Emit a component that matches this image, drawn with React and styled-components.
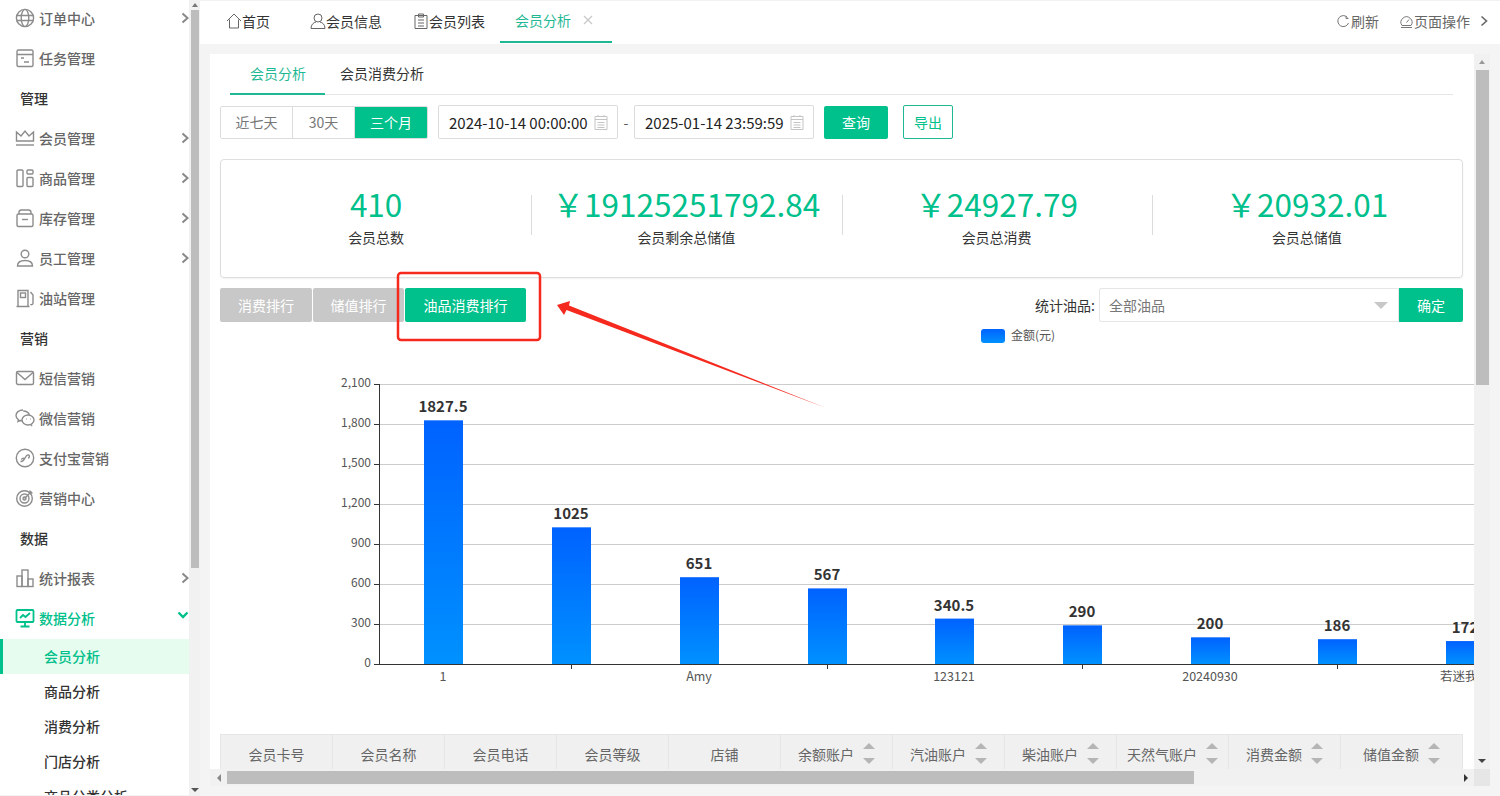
import React from "react";
import styled, { createGlobalStyle } from "styled-components";

const GREEN = "#00c08b";
const FONT = '"Noto Sans CJK SC", "Noto Sans", sans-serif';

const Global = createGlobalStyle`
  html, body { margin: 0; padding: 0; background: #f4f4f4; }
  body { font-family: ${FONT}; font-size: 14px; overflow: hidden; }
  * { box-sizing: border-box; }
`;

/* sidebar icons, 20x20 */
const icons = {
  globe: <><circle cx="10" cy="10" r="8.6" /><ellipse cx="10" cy="10" rx="3.8" ry="8.6" /><path d="M1.5 7.5h17M1.5 12.5h17" /></>,
  task: <><rect x="2" y="2" width="16" height="16.5" rx="1.5" /><path d="M2 6.5h16M6 10h3M9 14h5" /></>,
  crown: <><path d="M1.5 13V4l4.5 4L10 3l4 5 4.5-4v9z" /><path d="M1 17h18" /></>,
  goods: <><rect x="2" y="2" width="6" height="16.5" rx="1" /><rect x="12" y="2" width="6" height="4" rx="1" /><rect x="12" y="9.5" width="6" height="9" rx="1" /></>,
  box: <><path d="M4 6V4.5C4 3 5 2 6.5 2h7C15 2 16 3 16 4.5V6" /><rect x="2" y="6" width="16" height="12.5" rx="1.5" /><path d="M7 11.5h6" /></>,
  user: <><circle cx="10" cy="6" r="3.8" /><path d="M2.5 18c0-3.5 3-5.5 7.500-5.500s7.500 2 7.500 5.500z" /></>,
  fuel: <><path d="M3 18V2.500h10V18M1.500 18.500h13" /><rect x="5.500" y="5" width="5" height="4.500" /><path d="M15.500 4l2.500 3v8c0 2-2 2-2.500 1" /></>,
  mail: <><rect x="1.500" y="3.500" width="17" height="13" rx="1.500" /><path d="M2 4.500l8 7 8-7" /></>,
  wechat: <><path d="M8 2C4 2 1 4.500 1 7.500c0 1.800 1 3.200 2.500 4.300L3 13.500l2-1c.8.300 1.600.4 2.500.4" /><path d="M8.200 3c3 .1 5.500 1.800 6.300 4" /><ellipse cx="13" cy="12" rx="6" ry="5" /><path d="M16 16.500l1 1.500" /><path d="M11 11h.5M15 11h.5" /></>,
  alipay: <><circle cx="10" cy="10" r="8.700" /><path d="M5.500 13.500c2.500.5 3.500-1.500 4.500-3.500s2-3.500 3.500-3 1 3-.5 3M9.500 11c-1-1.200-3-.8-3 .7" /></>,
  target: <><circle cx="9.500" cy="10.500" r="7.800" /><circle cx="9.500" cy="10.500" r="4.500" /><circle cx="9.500" cy="10.500" r="1.500" /><path d="M9.500 10.500l7-7M15 2.500v2.500h2.500" /></>,
  bars: <><rect x="2" y="8" width="5" height="10.500" /><rect x="7" y="2" width="6" height="16.500" /><rect x="13" y="11" width="5" height="7.500" /></>,
  monitor: <><rect x="1.500" y="2" width="17" height="12" rx="1" /><path d="M5 10l3-3 2.500 2L15 5M10 14v4M5.500 18.500h9" /></>,
};

const menu = [
  { t: "item", label: "订单中心", icon: "globe", more: true },
  { t: "item", label: "任务管理", icon: "task" },
  { t: "group", label: "管理" },
  { t: "item", label: "会员管理", icon: "crown", more: true },
  { t: "item", label: "商品管理", icon: "goods", more: true },
  { t: "item", label: "库存管理", icon: "box", more: true },
  { t: "item", label: "员工管理", icon: "user", more: true },
  { t: "item", label: "油站管理", icon: "fuel" },
  { t: "group", label: "营销" },
  { t: "item", label: "短信营销", icon: "mail" },
  { t: "item", label: "微信营销", icon: "wechat" },
  { t: "item", label: "支付宝营销", icon: "alipay" },
  { t: "item", label: "营销中心", icon: "target" },
  { t: "group", label: "数据" },
  { t: "item", label: "统计报表", icon: "bars", more: true },
  { t: "item", label: "数据分析", icon: "monitor", open: true },
  { t: "sub", label: "会员分析", active: true },
  { t: "sub", label: "商品分析" },
  { t: "sub", label: "消费分析" },
  { t: "sub", label: "门店分析" },
  { t: "sub", label: "商品分类分析" },
];

const bars = [
  { x: 443, v: 1827.5, name: "1" },
  { x: 571, v: 1025 },
  { x: 699, v: 651, name: "Amy" },
  { x: 827, v: 567 },
  { x: 954, v: 340.5, name: "123121" },
  { x: 1082, v: 290 },
  { x: 1210, v: 200, name: "20240930" },
  { x: 1337, v: 186 },
  { x: 1465, v: 172, name: "若迷我的" },
];

const ticks = [
  { y: 384, l: "2,100" },
  { y: 424, l: "1,800" },
  { y: 464, l: "1,500" },
  { y: 504, l: "1,200" },
  { y: 544, l: "900" },
  { y: 584, l: "600" },
  { y: 624, l: "300" },
  { y: 664, l: "0" },
];

const columns = [
  { l: "会员卡号" },
  { l: "会员名称" },
  { l: "会员电话" },
  { l: "会员等级" },
  { l: "店铺" },
  { l: "余额账户", sort: true },
  { l: "汽油账户", sort: true },
  { l: "柴油账户", sort: true },
  { l: "天然气账户", sort: true },
  { l: "消费金额", sort: true },
  { l: "储值金额", sort: true },
];

const stats = [
  { v: "410", l: "会员总数" },
  { v: "￥19125251792.84", l: "会员剩余总储值" },
  { v: "￥24927.79", l: "会员总消费" },
  { v: "￥20932.01", l: "会员总储值" },
];

const Calendar = () => (
  <CalSvg viewBox="0 0 14 16">
    <path d="M1 2.500h12v13H1zM1 5.500h12M4 1v2M10 1v2M3.500 8.500h7M3.500 11h7M3.500 13.500h7" />
  </CalSvg>
);

const App = () => (
  <Shell>
    <Global />
    <Sidebar>
      <SideNav>
        {menu.map((m) => {
          if (m.t === "group") return <GroupLabel key={m.label}>{m.label}</GroupLabel>;
          if (m.t === "sub") return <SubItem key={m.label} $active={m.active}>{m.label}</SubItem>;
          return (
            <MenuItem key={m.label} $open={m.open}>
              <MenuIcon viewBox="0 0 20 20" $open={m.open}>{icons[m.icon]}</MenuIcon>
              {m.label}
              {m.more && (
                <Chevron viewBox="0 0 8 12"><path d="M1.500 1.500L6.500 6l-5 4.500" /></Chevron>
              )}
              {m.open && (
                <OpenChevron viewBox="0 0 12 8"><path d="M1.500 1.500L6 6l4.500-4.500" /></OpenChevron>
              )}
            </MenuItem>
          );
        })}
      </SideNav>
      <VBar>
        <ArrowBox $h={10}><TriUp $c="#777" /></ArrowBox>
        <VThumb $h={558} $w={8} />
        <VRest />
        <ArrowBox $h={13}><TriDown $c="#555" /></ArrowBox>
      </VBar>
    </Sidebar>

    <Main>
      <TopBar>
        <Tab $w={84}>
          <TabIcon viewBox="0 0 16 16"><path d="M1 8l7-7 7 7M3.500 6.500V15h9V6.500" /></TabIcon>首页
        </Tab>
        <Tab $w={103}>
          <TabIcon viewBox="0 0 16 16"><circle cx="8" cy="5" r="4" /><path d="M1 15.500c0-4 2.500-6 5-6.500M15 15.500c0-4-2.500-6-5-6.500M1 15.500h14" /></TabIcon>会员信息
        </Tab>
        <Tab $w={87}>
          <TabIcon viewBox="0 0 16 16"><path d="M2 2.500h12v13H2zM5.500 1h5v3h-5zM5 7h6M5 10h6M5 13h6" /></TabIcon>会员列表
        </Tab>
        <ActiveTab>
          会员分析
          <CloseMark viewBox="0 0 10 10"><path d="M1 1l8 8M9 1l-8 8" /></CloseMark>
        </ActiveTab>
        <TopActions>
          <TopAction>
            <ActionIcon viewBox="0 0 13 13"><path d="M10.500 2.500a5.500 5.500 0 1 0 1 5.500M9 1v2.500h2.500" /></ActionIcon>刷新
          </TopAction>
          <TopAction>
            <ActionIcon viewBox="0 0 13 13"><path d="M2 10.500a5.500 5.500 0 1 1 9 0zM6.500 7.500L9 4.500M1 12.500h11" /></ActionIcon>页面操作
          </TopAction>
          <TopChevron viewBox="0 0 8 12"><path d="M1.500 1.500L6.500 6l-5 4.500" /></TopChevron>
        </TopActions>
      </TopBar>

      <Body>
        <Card>
          <SubTabs>
            <SubTab $active>会员分析</SubTab>
            <SubTab>会员消费分析</SubTab>
          </SubTabs>

          <Filters>
            <Segment>
              <SegBtn $w={72}>近七天</SegBtn>
              <SegBtn $w={62}>30天</SegBtn>
              <SegBtn $w={72} $active>三个月</SegBtn>
            </Segment>
            <DateBox>2024-10-14 00:00:00<Calendar /></DateBox>
            <Dash>-</Dash>
            <DateBox>2025-01-14 23:59:59<Calendar /></DateBox>
            <PrimaryBtn $w={64}>查询</PrimaryBtn>
            <OutlineBtn>导出</OutlineBtn>
          </Filters>

          <StatsCard>
            {stats.map((s) => (
              <Stat key={s.l}>
                <StatValue>{s.v}</StatValue>
                <StatLabel>{s.l}</StatLabel>
              </Stat>
            ))}
          </StatsCard>

          <RankRow>
            <RankGroup>
              <RankBtn $w={92}>消费排行</RankBtn>
              <RankBtn $w={91}>储值排行</RankBtn>
              <RankBtn $w={121} $active>油品消费排行</RankBtn>
            </RankGroup>
            <OilFilter>
              <OilLabel>统计油品:</OilLabel>
              <OilSelect>全部油品<Caret /></OilSelect>
              <ConfirmBtn>确定</ConfirmBtn>
            </OilFilter>
          </RankRow>

          <Legend>
            <LegendSwatch />
            <LegendText>金额(元)</LegendText>
          </Legend>

          <ChartSvg viewBox="220 344 1254 390" width="1254" height="390">
            <defs>
              <linearGradient id="barFill" x1="0" y1="0" x2="0" y2="1">
                <stop offset="0" stopColor="#0062ff" />
                <stop offset="1" stopColor="#0091ff" />
              </linearGradient>
            </defs>
            {ticks.map((t) => (
              <g key={t.l}>
                {t.y !== 664 && <GridLine x1="379" x2="1474" y1={t.y + 0.5} y2={t.y + 0.5} />}
                <AxisLine x1="374" x2="379" y1={t.y + 0.5} y2={t.y + 0.5} />
                <AxisText x="371" y={t.y + 3} textAnchor="end">{t.l}</AxisText>
              </g>
            ))}
            {bars.map((b) => {
              const top = 664 - (b.v * 280) / 2100;
              return (
                <g key={b.x}>
                  <rect x={b.x - 19} y={top} width="39" height={664 - top} fill="url(#barFill)" />
                  <ValueText x={b.x} y={top - 8} textAnchor="middle">{b.v}</ValueText>
                  {b.name ? (
                    <CategoryText x={b.x} y="681" textAnchor="middle">{b.name}</CategoryText>
                  ) : (
                    <AxisLine x1={b.x + 0.5} x2={b.x + 0.5} y1="664" y2="669" />
                  )}
                </g>
              );
            })}
            <AxisLine x1="379.500" x2="379.500" y1="384" y2="664" />
            <AxisLine x1="374" x2="1474" y1="664.500" y2="664.500" />
          </ChartSvg>

          <TableHead>
            {columns.map((c) => (
              <HeadCell key={c.l}>
                {c.l}
                {c.sort && (
                  <SortBox>
                    <SortUp />
                    <SortDown />
                  </SortBox>
                )}
              </HeadCell>
            ))}
          </TableHead>
        </Card>

        <VBar>
          <ArrowBox $h={16}><TriUp $c="#999" /></ArrowBox>
          <VThumb $h={315} $w={13} />
          <VRest />
          <ArrowBox $h={16}><TriDown $c="#444" /></ArrowBox>
        </VBar>

        <HBar>
          <HArrow><TriLeft /></HArrow>
          <HThumb />
          <HRest />
          <HArrow><TriRight /></HArrow>
        </HBar>
        <Corner />
      </Body>
    </Main>

    <Annotation viewBox="0 0 1500 796" width="1500" height="796">
      <rect x="398" y="273" width="142" height="67" rx="3" fill="none" stroke="#f5291e" strokeWidth="2.500" />
      <polygon points="557,305 570,301 569,305.500 826,408 566.500,310 564,315" fill="#f5291e" />
    </Annotation>
  </Shell>
);

export default App;

const Shell = styled.div`
  position: relative;
  display: flex;
  width: 1500px;
  height: 796px;
  overflow: hidden;
  background: #f4f4f4;
`;

const Sidebar = styled.aside`
  display: flex;
  flex: 0 0 200px;
  height: 796px;
`;

const SideNav = styled.nav`
  flex: 0 0 189px;
  height: 796px;
  margin-top: -1px;
  overflow: hidden;
  background: #fff;
`;

const MenuItem = styled.div`
  position: relative;
  display: flex;
  align-items: center;
  gap: 4px;
  height: 40px;
  padding: 0 0 2px 15px;
  font-weight: 500;
  line-height: 20px;
  color: ${(p) => (p.$open ? GREEN : "#666")};
`;

const MenuIcon = styled.svg`
  flex: 0 0 20px;
  width: 20px;
  height: 20px;
  fill: none;
  stroke: currentColor;
  stroke-width: ${(p) => (p.$open ? 1.8 : 1.4)};
  opacity: ${(p) => (p.$open ? 1 : 0.75)};
`;

const Chevron = styled.svg`
  flex: 0 0 8px;
  width: 8px;
  height: 12px;
  margin-left: auto;
  fill: none;
  stroke: #888;
  stroke-width: 2;
`;

const OpenChevron = styled.svg`
  position: absolute;
  right: 0;
  top: 12px;
  width: 12px;
  height: 8px;
  fill: none;
  stroke: ${GREEN};
  stroke-width: 2.400;
`;

const GroupLabel = styled.div`
  height: 40px;
  padding-left: 20px;
  font-weight: 500;
  line-height: 38px;
  color: #333;
`;

const SubItem = styled.div`
  height: 35px;
  padding-left: 44px;
  font-weight: 500;
  line-height: 35px;
  color: ${(p) => (p.$active ? GREEN : "#333")};
  background: ${(p) => (p.$active ? "#e6fcee" : "#fff")};
  box-shadow: ${(p) => (p.$active ? `inset 3px 0 0 ${GREEN}` : "none")};
`;

const VBar = styled.div`
  display: flex;
  flex-direction: column;
  align-items: center;
  flex: 1;
  background: #f1f1f1;
`;

const ArrowBox = styled.div`
  display: flex;
  align-items: center;
  justify-content: center;
  flex: 0 0 ${(p) => p.$h}px;
  width: 100%;
`;

const VThumb = styled.div`
  flex: 0 0 ${(p) => p.$h}px;
  width: ${(p) => p.$w}px;
  background: #bdbdbd;
`;

const VRest = styled.div`
  flex: 1;
`;

const TriUp = styled.i`
  display: block;
  width: 0;
  height: 0;
  border-left: 3px solid transparent;
  border-right: 3px solid transparent;
  border-bottom: 4px solid ${(p) => p.$c};
`;

const TriDown = styled.i`
  display: block;
  width: 0;
  height: 0;
  border-left: 4px solid transparent;
  border-right: 4px solid transparent;
  border-top: 4px solid ${(p) => p.$c};
`;

const TriLeft = styled.i`
  display: block;
  width: 0;
  height: 0;
  border-top: 4px solid transparent;
  border-bottom: 4px solid transparent;
  border-right: 4px solid #888;
`;

const TriRight = styled.i`
  display: block;
  width: 0;
  height: 0;
  border-top: 4px solid transparent;
  border-bottom: 4px solid transparent;
  border-left: 4px solid #333;
`;

const Main = styled.main`
  display: flex;
  flex-direction: column;
  flex: 1;
  min-width: 0;
`;

const TopBar = styled.header`
  display: flex;
  align-items: stretch;
  flex: 0 0 44px;
  padding-left: 26px;
  border-top: 1px solid #f2f2f2;
  background: #fff;
`;

const Tab = styled.div`
  display: flex;
  align-items: center;
  width: ${(p) => p.$w}px;
  padding-bottom: 3px;
  font-size: 14px;
  color: #333;
`;

const TabIcon = styled.svg`
  width: 16px;
  height: 16px;
  fill: none;
  stroke: #666;
  stroke-width: 1;
`;

const ActiveTab = styled.div`
  display: flex;
  align-items: center;
  width: 112px;
  height: 42px;
  padding: 0 0 3px 15px;
  color: #1fb894;
  border-bottom: 2px solid #1fb894;
`;

const CloseMark = styled.svg`
  width: 10px;
  height: 10px;
  margin-left: 12px;
  fill: none;
  stroke: #c8c8c8;
  stroke-width: 1.200;
`;

const TopActions = styled.div`
  display: flex;
  align-items: center;
  gap: 21px;
  margin-left: auto;
  padding: 0 12px 3px 0;
  font-size: 14px;
  white-space: nowrap;
  color: #666;
`;

const TopChevron = styled.svg`
  flex: 0 0 8px;
  width: 8px;
  height: 12px;
  margin-left: -11px;
  fill: none;
  stroke: #666;
  stroke-width: 1.600;
`;

const TopAction = styled.div`
  display: flex;
  align-items: center;
  gap: 1px;
`;

const ActionIcon = styled.svg`
  flex: 0 0 13px;
  width: 13px;
  height: 13px;
  fill: none;
  stroke: #777;
  stroke-width: 1;
`;

const Body = styled.div`
  display: grid;
  grid-template-columns: 1264px 16px;
  grid-template-rows: 715px 17px;
  padding: 10px 0 0 10px;
`;

const Card = styled.section`
  padding-left: 10px;
  overflow: hidden;
  background: #fff;
`;

const SubTabs = styled.div`
  display: flex;
  width: 1223px;
  height: 41px;
  margin-left: 10px;
  border-bottom: 1px solid #e6e6e6;
`;

const SubTab = styled.div`
  height: 41px;
  padding: 0 ${(p) => (p.$active ? "19px 0 20px" : "15px")};
  width: ${(p) => (p.$active ? "95px" : "auto")};
  line-height: 39px;
  color: ${(p) => (p.$active ? "#1fb894" : "#333")};
  border-bottom: ${(p) => (p.$active ? "2px solid #1fb894" : "none")};
`;

const Filters = styled.div`
  display: flex;
  align-items: center;
  height: 34px;
  margin-top: 10px;
`;

const Segment = styled.div`
  display: flex;
  height: 33px;
  margin-right: 10px;
  overflow: hidden;
  border: 1px solid #dcdcdc;
  border-radius: 2px;
`;

const SegBtn = styled.div`
  width: ${(p) => p.$w}px;
  line-height: 31px;
  text-align: center;
  color: ${(p) => (p.$active ? "#fff" : "#777")};
  background: ${(p) => (p.$active ? GREEN : "#fff")};
  border-right: 1px solid #dcdcdc;
  &:last-child { border-right: none; }
`;

const DateBox = styled.div`
  display: flex;
  align-items: center;
  justify-content: space-between;
  width: 180px;
  height: 34px;
  padding: 0 9px 0 10px;
  font-size: 15px;
  white-space: nowrap;
  color: #222;
  border: 1px solid #dcdcdc;
  border-radius: 2px;
`;

const CalSvg = styled.svg`
  flex: 0 0 14px;
  width: 14px;
  height: 16px;
  fill: none;
  stroke: #c4c4c4;
  stroke-width: 1;
`;

const Dash = styled.span`
  width: 16px;
  text-align: center;
  color: #555;
`;

const PrimaryBtn = styled.div`
  width: ${(p) => p.$w}px;
  height: 33px;
  margin-left: 10px;
  line-height: 33px;
  text-align: center;
  color: #fff;
  background: ${GREEN};
  border-radius: 2px;
`;

const OutlineBtn = styled.div`
  width: 50px;
  height: 34px;
  margin-left: 15px;
  line-height: 32px;
  text-align: center;
  color: ${GREEN};
  border: 1px solid #1fb894;
  border-radius: 2px;
`;

const StatsCard = styled.div`
  display: flex;
  align-items: center;
  width: 1243px;
  height: 119px;
  margin-top: 20px;
  border: 1px solid #dedede;
  border-radius: 4px;
  box-shadow: 0 1px 2px rgba(0, 0, 0, 0.06);
`;

const Stat = styled.div`
  position: relative;
  flex: 1;
  padding-bottom: 11px;
  text-align: center;
  & + &::before {
    content: "";
    position: absolute;
    left: 0;
    top: 15px;
    bottom: 22px;
    width: 1px;
    background: #dcdcdc;
  }
`;

const StatValue = styled.div`
  font-size: 31.500px;
  line-height: 46px;
  color: ${GREEN};
`;

const StatLabel = styled.div`
  margin-top: 2px;
  font-size: 14px;
  line-height: 18px;
  color: #333;
`;

const RankRow = styled.div`
  display: flex;
  justify-content: space-between;
  width: 1243px;
  height: 34px;
  margin-top: 10px;
`;

const RankGroup = styled.div`
  display: flex;
  gap: 1px;
`;

const RankBtn = styled.div`
  width: ${(p) => p.$w}px;
  font-size: 14px;
  line-height: 34px;
  text-align: center;
  color: #fff;
  background: ${(p) => (p.$active ? GREEN : "#c8c8c8")};
  border-radius: 2px;
`;

const OilFilter = styled.div`
  display: flex;
  align-items: center;
`;

const OilLabel = styled.span`
  margin-right: 4px;
  color: #333;
`;

const OilSelect = styled.div`
  display: flex;
  align-items: center;
  justify-content: space-between;
  width: 300px;
  height: 34px;
  padding: 0 10px 0 9px;
  color: #777;
  border: 1px solid #e6e6e6;
  border-radius: 2px 0 0 2px;
`;

const Caret = styled.i`
  width: 0;
  height: 0;
  border-left: 7px solid transparent;
  border-right: 7px solid transparent;
  border-top: 7px solid #c8c8c8;
`;

const ConfirmBtn = styled.div`
  width: 64px;
  height: 34px;
  font-size: 14px;
  line-height: 34px;
  text-align: center;
  color: #fff;
  background: ${GREEN};
  border-radius: 0 2px 2px 0;
`;

const Legend = styled.div`
  display: flex;
  align-items: center;
  gap: 6px;
  height: 16px;
  margin-top: 6px;
  padding-left: 761px;
  font-size: 12px;
  color: #555;
`;

const LegendSwatch = styled.i`
  width: 24px;
  height: 14px;
  border-radius: 3px;
  background: linear-gradient(#0062ff, #0091ff);
`;

const LegendText = styled.span`
  padding-bottom: 2px;
  line-height: 14px;
`;

const ChartSvg = styled.svg`
  display: block;
`;

const GridLine = styled.line`
  stroke: #ccc;
  stroke-width: 1;
`;

const AxisLine = styled.line`
  stroke: #333;
  stroke-width: 1;
`;

const AxisText = styled.text`
  font-family: ${FONT};
  font-size: 12px;
  fill: #555;
`;

const CategoryText = styled(AxisText)`
  font-size: 12.500px;
`;

const ValueText = styled.text`
  font-family: ${FONT};
  font-size: 15px;
  font-weight: 700;
  fill: #333;
`;

const TableHead = styled.div`
  display: grid;
  grid-template-columns: 111px repeat(9, 112px) 122px;
  width: 1243px;
  height: 35px;
  background: #f0f0f0;
  border: 1px solid #e6e6e6;
  border-bottom: none;
`;

const HeadCell = styled.div`
  display: flex;
  align-items: center;
  justify-content: center;
  gap: 9px;
  padding-top: 3px;
  font-size: 14px;
  color: #666;
  border-left: 1px solid #e6e6e6;
  &:first-child { border-left: none; }
`;

const SortBox = styled.div`
  display: flex;
  flex-direction: column;
  gap: 9px;
`;

const SortUp = styled.i`
  display: block;
  width: 0;
  height: 0;
  border-left: 6px solid transparent;
  border-right: 6px solid transparent;
  border-bottom: 6px solid #b5b5b5;
`;

const SortDown = styled.i`
  display: block;
  width: 0;
  height: 0;
  border-left: 6px solid transparent;
  border-right: 6px solid transparent;
  border-top: 6px solid #b5b5b5;
`;

const HBar = styled.div`
  display: flex;
  align-items: center;
  background: #f1f1f1;
`;

const HArrow = styled.div`
  display: flex;
  align-items: center;
  justify-content: center;
  flex: 0 0 17px;
`;

const HThumb = styled.div`
  flex: 0 0 967px;
  height: 13px;
  background: #bdbdbd;
`;

const HRest = styled.div`
  flex: 1;
`;

const Corner = styled.div`
  background: #e6e6e6;
`;

const Annotation = styled.svg`
  position: absolute;
  left: 0;
  top: 0;
  pointer-events: none;
`;
